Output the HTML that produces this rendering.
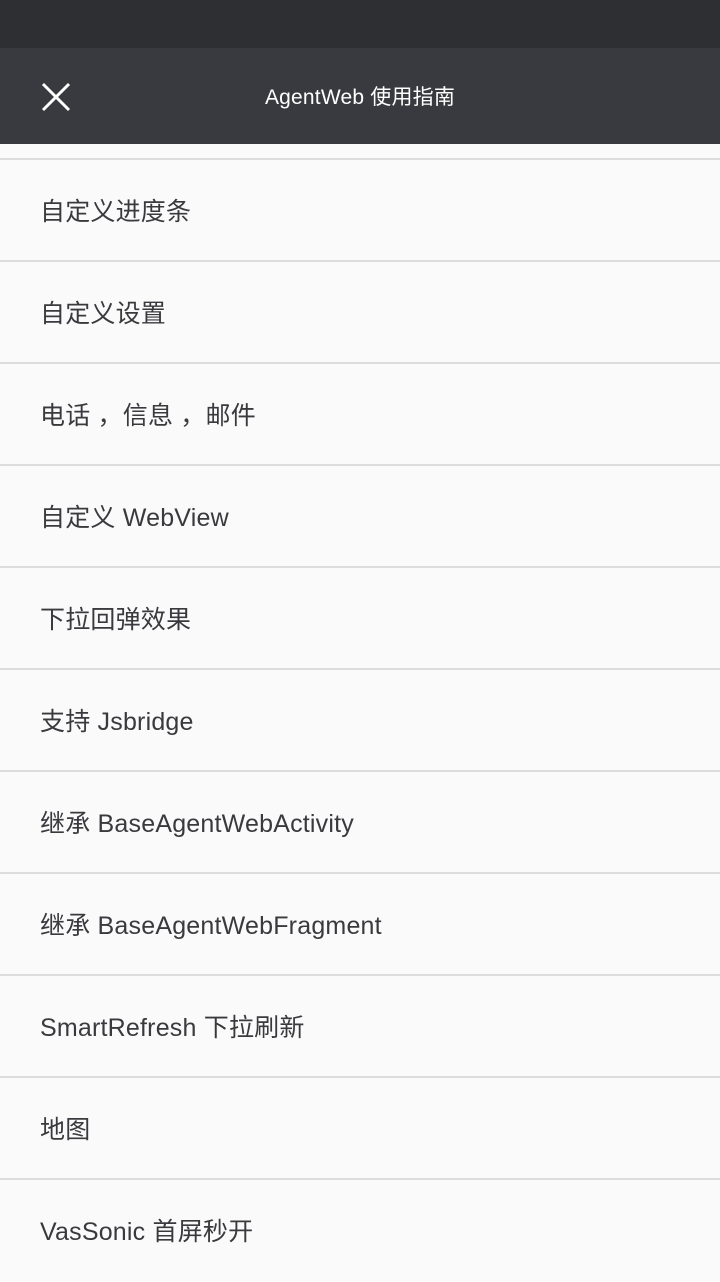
<!DOCTYPE html>
<html><head><meta charset="utf-8"><style>
*{margin:0;padding:0;box-sizing:border-box}
body{width:720px;height:1280px;overflow:hidden;background:#fafafa;font-family:"Liberation Sans","Noto Sans CJK SC",sans-serif}
.sb{height:48px;background:#2e2f33}
.tb{height:96px;background:#393a3f;position:relative;color:#fff}
.tb svg{position:absolute;left:41px;top:34px}
.tb .t{position:absolute;left:0;right:0;top:2px;line-height:96px;text-align:center;font-size:21px;letter-spacing:0.2px}
.gap{height:14px}
.d{height:2px;background:#dcdcdc}
.it{height:100px;line-height:100px;padding-top:2px;padding-left:40px;font-size:25px;letter-spacing:0.2px;color:#3a3a3e}
</style></head><body>
<div class="sb"></div>
<div class="tb"><svg width="30" height="30" viewBox="0 0 30 30"><path d="M2 2L28 28M28 2L2 28" stroke="#fff" stroke-width="3"/></svg><div class="t">AgentWeb 使用指南</div></div>
<div class="gap"></div>
<div class="d"></div><div class="it">自定义进度条</div>
<div class="d"></div><div class="it">自定义设置</div>
<div class="d"></div><div class="it">电话 ，信息 ，邮件</div>
<div class="d"></div><div class="it">自定义 WebView</div>
<div class="d"></div><div class="it">下拉回弹效果</div>
<div class="d"></div><div class="it">支持 Jsbridge</div>
<div class="d"></div><div class="it">继承 BaseAgentWebActivity</div>
<div class="d"></div><div class="it">继承 BaseAgentWebFragment</div>
<div class="d"></div><div class="it">SmartRefresh 下拉刷新</div>
<div class="d"></div><div class="it">地图</div>
<div class="d"></div><div class="it">VasSonic 首屏秒开</div>
</body></html>
